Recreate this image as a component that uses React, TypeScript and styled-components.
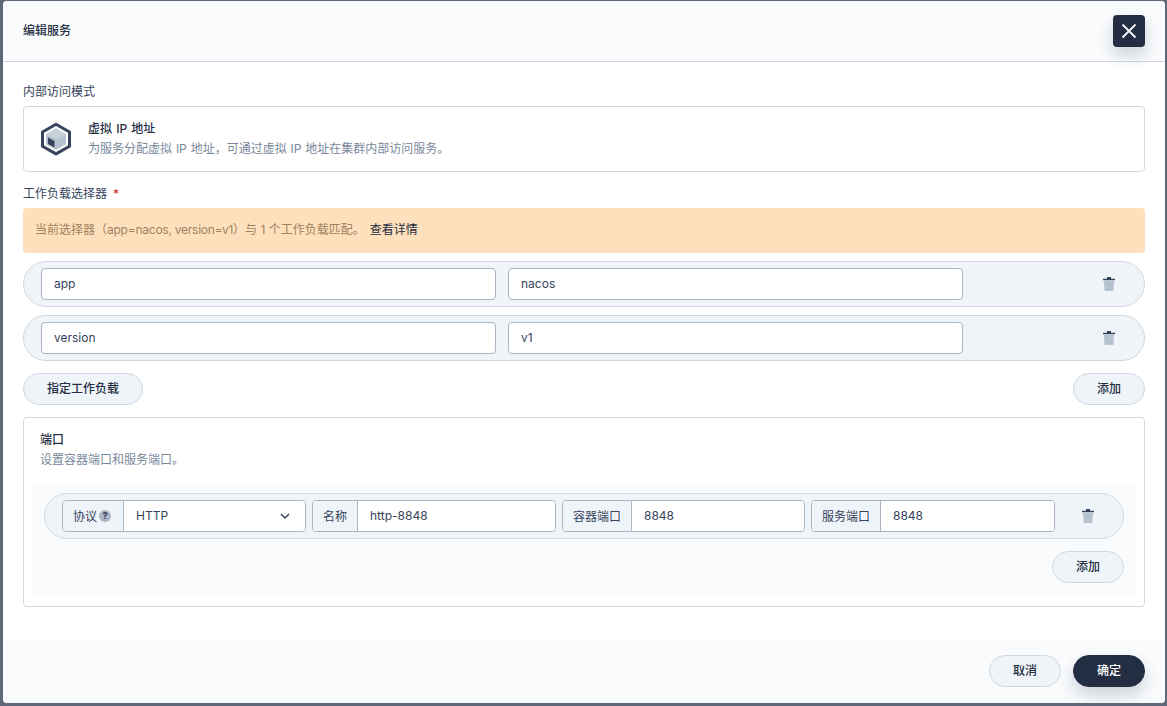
import React from "react";
import styled, { createGlobalStyle } from "styled-components";

const GlobalStyle = createGlobalStyle`
  html, body {
    margin: 0;
    padding: 0;
    height: 100%;
    background: #5f6779;
  }
  body {
    font-family: Inter, "Noto Sans CJK SC", sans-serif;
    font-size: 12px;
    color: #242e42;
  }
  * { box-sizing: border-box; }
`;

const Backdrop = styled.div`
  width: 1167px;
  height: 706px;
  overflow: hidden;
  padding: 1px 2px 3px 3px;
`;

const Modal = styled.div`
  height: 702px;
  background: #fff;
  border-radius: 4px;
  display: flex;
  flex-direction: column;
  overflow: hidden;
`;

const Header = styled.header`
  height: 61px;
  flex: none;
  display: flex;
  align-items: center;
  justify-content: space-between;
  padding: 0 20px;
  background: #f9fbfd;
  border-bottom: 1px solid #d1d7e2;
`;

const Title = styled.h1`
  margin: 0;
  font-size: 12px;
  font-weight: 500;
  line-height: 20px;
`;

const CloseButton = styled.button`
  width: 32px;
  height: 32px;
  padding: 0;
  border: 0;
  border-radius: 4px;
  background: #242e42;
  box-shadow: 0 8px 16px rgba(36, 46, 66, 0.2);
  display: flex;
  align-items: center;
  justify-content: center;
`;

const Body = styled.main`
  flex: 1;
  padding: 20px 20px 0;
  display: flex;
  flex-direction: column;
`;

const FieldLabel = styled.div`
  height: 20px;
  line-height: 20px;
  color: #36435c;
  margin-bottom: 4px;
  display: flex;
  gap: 6px;
`;

const Required = styled.span`
  color: #ca2621;
`;

const ModeCard = styled.div`
  height: 66px;
  border: 1px solid #d1d7e2;
  border-radius: 4px;
  display: flex;
  align-items: center;
  gap: 16px;
  padding-left: 16px;
  margin-bottom: 12px;
`;

const ModeTitle = styled.div`
  font-weight: 500;
  line-height: 20px;
  word-spacing: 1px;
`;

const Hint = styled.div`
  color: #79879c;
  line-height: 20px;
  word-spacing: 0.5px;
`;

const Alert = styled.div`
  height: 45px;
  border-radius: 4px;
  background: #ffe0bd;
  color: #a0825f;
  padding: 0 12px 1px;
  line-height: 20px;
  display: flex;
  align-items: center;
  margin-bottom: 8px;
`;

const AlertCode = styled.span`
  letter-spacing: -0.24px;
`;

const AlertLink = styled.span`
  color: #242e42;
  margin-left: 5px;
`;

const KeyValueRow = styled.div`
  height: 46px;
  flex: none;
  display: flex;
  align-items: center;
  gap: 12px;
  padding: 0 18px 0 17px;
  border: 1px solid #d1d7e2;
  border-radius: 23px;
  background: #eff4f9;
  margin-bottom: 8px;
`;

const TextInput = styled.input`
  height: 32px;
  min-width: 0;
  flex: none;
  width: 455px;
  padding: 0 12px 2px;
  border: 1px solid #abb4c4;
  border-radius: 4px;
  background: #fff;
  color: #36435c;
  font: inherit;
  outline: none;
`;

const TrashSlot = styled.span`
  margin-left: auto;
  width: 16px;
  height: 16px;
  display: flex;
  margin-right: ${(p: { $right: number }) => p.$right}px;
`;

const ActionRow = styled.div`
  display: flex;
  justify-content: space-between;
  margin-top: 4px;
  margin-bottom: 12px;
`;

const Pill = styled.button<{ $primary?: boolean }>`
  height: 32px;
  padding: 0 23px 3px;
  min-width: 72px;
  border-radius: 16px;
  border: 1px solid ${(p) => (p.$primary ? "#242e42" : "#d1d7e2")};
  background: ${(p) => (p.$primary ? "#242e42" : "#eff4f9")};
  color: ${(p) => (p.$primary ? "#fff" : "#242e42")};
  box-shadow: ${(p) => (p.$primary ? "0 8px 16px rgba(36, 46, 66, 0.2)" : "none")};
  font: inherit;
  font-weight: 500;
`;

const PortBox = styled.section`
  height: 190px;
  border: 1px solid #d1d7e2;
  border-radius: 4px;
  padding: 12px 8px 11px 8px;
`;

const BoxTitle = styled.div`
  padding-left: 8px;
  font-weight: 500;
  line-height: 20px;
`;

const BoxHint = styled(Hint)`
  padding-left: 8px;
  line-height: 20px;
`;

const PortList = styled.div`
  margin-top: 12px;
  height: 113px;
  border-radius: 4px;
  background: #f9fbfd;
  padding: 11px 12px;
`;

const PortRow = styled.div`
  height: 46px;
  display: flex;
  align-items: center;
  gap: 6px;
  padding: 0 27px 0 17px;
  border: 1px solid #d1d7e2;
  border-radius: 23px;
  background: #eff4f9;
`;

const Group = styled.div`
  width: ${(p: { $w: number }) => p.$w}px;
  height: 32px;
  flex: none;
  display: flex;
  border: 1px solid #abb4c4;
  border-radius: 4px;
  overflow: hidden;
`;

const Addon = styled.span`
  flex: none;
  padding: 0 10px 2px;
  display: flex;
  align-items: center;
  gap: 2px;
  background: #eff4f9;
  border-right: 1px solid #abb4c4;
  color: #36435c;
`;

const GroupValue = styled.span`
  flex: 1;
  display: flex;
  align-items: center;
  justify-content: space-between;
  padding: 0 14px 2px 12px;
  background: #fff;
  color: #36435c;
`;

const HelpDot = styled.span`
  width: 12px;
  height: 12px;
  margin: 2px 2px 0 0;
  border-radius: 50%;
  background: #abb4c4;
  color: #36435c;
  font-size: 9px;
  font-weight: 800;
  line-height: 12px;
  text-align: center;
`;

const PortAdd = styled.div`
  display: flex;
  justify-content: flex-end;
  margin-top: 12px;
`;

const Footer = styled.footer`
  height: 64px;
  flex: none;
  margin-top: auto;
  background: #f9fbfd;
  display: flex;
  align-items: center;
  justify-content: flex-end;
  gap: 12px;
  padding: 0 20px;
`;

const HexIcon = () => (
  <svg width="32" height="34" viewBox="0 0 32 34">
    <path d="M16 2.300 29.500 10V24.200L16 31.900 2.500 24.200V10Z" fill="none" stroke="#36435c" strokeWidth="3" strokeLinejoin="round" />
    <path d="M16 6.500 26 12.200V22.300L16 28 6 22.300V12.200Z" fill="#b6c2cf" />
    <path d="M16 6.500 26 12.200 16 17.500 6 12.200Z" fill="#c6d0da" />
    <path d="M8 15.500 14.500 19V25.500L8 22Z" fill="#36435c" />
  </svg>
);

const TrashIcon = () => (
  <svg width="16" height="16" viewBox="0 0 16 16">
    <path d="M6 1h4v1.800h4v1.500H2V2.800h4z" fill="#36435c" />
    <path d="M3 5h10l-.5 9.600c0 .3-.3.500-.6.500H4.100c-.3 0-.6-.2-.6-.5z" fill="#b6c2cf" />
  </svg>
);

const Chevron = () => (
  <svg width="12" height="12" viewBox="0 0 12 12">
    <path d="M2 5l4 4 4-4" fill="none" stroke="#36435c" strokeWidth="1.500" />
  </svg>
);

const selectors = [
  { key: "app", value: "nacos" },
  { key: "version", value: "v1" },
];

const ports = [
  { label: "名称", value: "http-8848", w: 244 },
  { label: "容器端口", value: "8848", w: 243 },
  { label: "服务端口", value: "8848", w: 244 },
];

export default function App() {
  return (
    <Backdrop>
      <GlobalStyle />
      <Modal>
        <Header>
          <Title>编辑服务</Title>
          <CloseButton aria-label="关闭">
            <svg width="16" height="16" viewBox="0 0 16 16">
              <path d="M1.500 1.500l13 13M14.500 1.500l-13 13" stroke="#f4f6f9" strokeWidth="1.800" />
            </svg>
          </CloseButton>
        </Header>
        <Body>
          <FieldLabel>内部访问模式</FieldLabel>
          <ModeCard>
            <HexIcon />
            <div>
              <ModeTitle>虚拟 IP 地址</ModeTitle>
              <Hint>为服务分配虚拟 IP 地址，可通过虚拟 IP 地址在集群内部访问服务。</Hint>
            </div>
          </ModeCard>
          <FieldLabel>
            工作负载选择器 <Required>*</Required>
          </FieldLabel>
          <Alert>
            <span>
              当前选择器（<AlertCode>app=nacos, version=v1</AlertCode>）与 1 个工作负载匹配。
            </span>
            <AlertLink>查看详情</AlertLink>
          </Alert>
          {selectors.map((s) => (
            <KeyValueRow key={s.key}>
              <TextInput defaultValue={s.key} />
              <TextInput defaultValue={s.value} />
              <TrashSlot $right={9}>
                <TrashIcon />
              </TrashSlot>
            </KeyValueRow>
          ))}
          <ActionRow>
            <Pill>指定工作负载</Pill>
            <Pill>添加</Pill>
          </ActionRow>
          <PortBox>
            <BoxTitle>端口</BoxTitle>
            <BoxHint>设置容器端口和服务端口。</BoxHint>
            <PortList>
              <PortRow>
                <Group $w={244}>
                  <Addon>
                    协议<HelpDot>?</HelpDot>
                  </Addon>
                  <GroupValue>
                    HTTP
                    <Chevron />
                  </GroupValue>
                </Group>
                {ports.map((p) => (
                  <Group key={p.label} $w={p.w}>
                    <Addon>{p.label}</Addon>
                    <GroupValue>{p.value}</GroupValue>
                  </Group>
                ))}
                <TrashSlot $right={0}>
                  <TrashIcon />
                </TrashSlot>
              </PortRow>
              <PortAdd>
                <Pill>添加</Pill>
              </PortAdd>
            </PortList>
          </PortBox>
        </Body>
        <Footer>
          <Pill>取消</Pill>
          <Pill $primary>确定</Pill>
        </Footer>
      </Modal>
    </Backdrop>
  );
}
